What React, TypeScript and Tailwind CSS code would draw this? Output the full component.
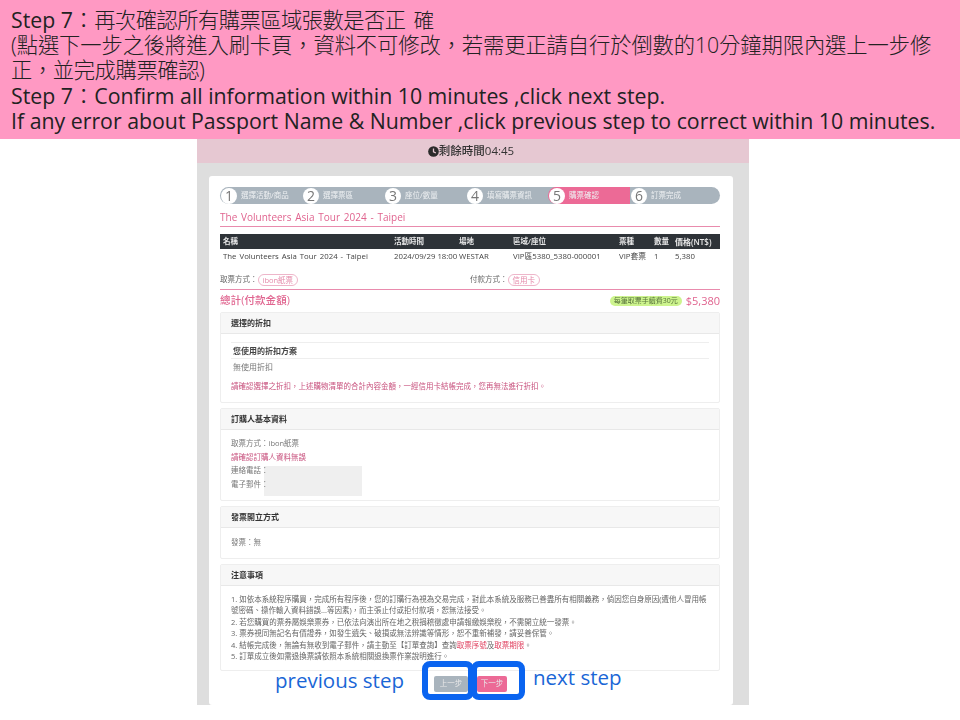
const font = { fontFamily: '"Open Sans","Noto Sans CJK TC",sans-serif' };

const steps = ['選擇活動/商品', '選擇票區', '座位/數量', '填寫購票資訊', '購票確認', '訂票完成'];
const cols = 'grid grid-cols-[171px_65px_54px_106px_35px_21px_1fr] px-[3px] items-center';

function Panel({ title, bodyClass, children }: { title: string; bodyClass: string; children: React.ReactNode }) {
  return (
    <section className="rounded-[2px] border border-[#eeeeee] bg-white">
      <div className="flex h-[21px] items-center border-b border-[#e8e8e8] bg-[#f7f7f7] px-[10px] text-[8px] font-semibold text-[#333]">{title}</div>
      <div className={bodyClass}>{children}</div>
    </section>
  );
}

export default function App() {
  return (
    <div lang="zh-TW" className="relative h-[720px] w-[960px] overflow-hidden bg-white" style={font}>
      <header className="h-[139px] bg-[#ff99c3] pl-[11px] pt-[7px] text-[21.3px] leading-[25px] text-[#222]">
        <div className="h-[25px] whitespace-nowrap">Step 7<span className="font-light">：</span><span className="font-light tracking-[-0.55px]">再次確認所有購票區域張數是否正</span><span className="ml-[8px] text-[20.7px] font-light">確</span></div>
        <div className="h-[25px] whitespace-nowrap font-light tracking-[-0.1px]">(點選下一步之後將進入刷卡頁，資料不可修改，若需更正請自行於倒數的10分鐘期限內選上一步修</div>
        <div className="h-[25px] font-light tracking-[-0.4px]">正，並完成購票確認)</div>
        <div className="mt-[1px] h-[25px] whitespace-nowrap">Step 7<span className="font-light">：</span>Confirm all information within 10 minutes ,click next step.</div>
        <div className="h-[25px] whitespace-nowrap">If any error about Passport Name &amp; Number ,click previous step to correct within 10 minutes.</div>
      </header>

      <main className="ml-[197px] h-[566px] w-[552px] bg-[#dedede] blur-[0.35px]">
        <div className="flex h-[24px] items-center justify-center bg-[#e6c8d2] pr-[4px] text-[11.5px] font-medium text-[#333]">
          <svg width="11" height="11" viewBox="0 0 12 12"><circle cx="6" cy="6" r="5.8" fill="#2b2b2b" /><path d="M6 2.8V6.3L8.6 7.6" stroke="#e6c8d2" strokeWidth="1.4" fill="none" /></svg>
          <span>剩餘時間04:45</span>
        </div>

        <div className="mx-[12px] mt-[13px] h-[529px] w-[524px] rounded-[3px] bg-white pl-[11px] pr-[13px] pt-[11px]">
          <div className="flex h-[17px] rounded-full bg-[#a9b4bd]">
            {steps.map((s, i) => (
              <div key={s} className={`flex w-[82px] shrink-0 items-center gap-[4px] pl-[1px] ${i === 4 ? 'rounded-l-full bg-[#ec6a96]' : ''}`}>
                <span className="flex size-[16px] shrink-0 items-center justify-center rounded-full bg-white text-[14px] leading-[16px] text-[#777]">{i + 1}</span>
                <span className="whitespace-nowrap text-[7.5px] text-[#eef0f2]">{s}</span>
              </div>
            ))}
          </div>

          <div className="mt-[7px] border-b border-[#e98bad] pb-[2px] text-[10px] leading-[13px] text-[#e0648f] [word-spacing:1.2px]">The Volunteers Asia Tour 2024 - Taipei</div>

          <div className={`${cols} mt-[7px] h-[15px] bg-[#2e3338] text-[7.5px] font-semibold text-[#e8e8e8]`}>
            <span>名稱</span><span>活動時間</span><span>場地</span><span>區域/座位</span><span>票種</span><span>數量</span><span className="text-[8px]">價格(NT$)</span>
          </div>
          <div className={`${cols} h-[16px] whitespace-nowrap text-[7.8px] text-[#444]`}>
            <span className="[word-spacing:1px]">The Volunteers Asia Tour 2024 - Taipei</span><span>2024/09/29 18:00</span><span>WESTAR</span><span>VIP區5380_5380-000001</span><span>VIP套票</span><span>1</span><span>5,380</span>
          </div>

          <div className="mt-[7px] flex h-[18px] items-center border-b border-[#e98bad] pb-[2px] text-[7.5px] text-[#666]">
            <div className="flex w-[250px] items-center">取票方式：<span className="rounded-full border border-[#eeb6ca] px-[4px] text-[7.5px] leading-[10px] text-[#e58aaa]">ibon紙票</span></div>
            <div className="flex items-center">付款方式：<span className="rounded-full border border-[#eeb6ca] px-[4px] text-[7.5px] leading-[10px] text-[#e58aaa]">信用卡</span></div>
          </div>

          <div className="flex h-[22px] items-center justify-between text-[#e0648f]">
            <span className="text-[10.5px] font-medium tracking-[0.1px]">總計(付款金額)</span>
            <div className="flex items-center gap-[4px]">
              <span className="rounded-full bg-[#cdf48e] px-[4px] text-[7px] leading-[10px] text-[#55703a]">每筆取票手續費30元</span>
              <span className="text-[11px]">$5,380</span>
            </div>
          </div>

          <div className="flex flex-col gap-[5px]">
            <Panel title="選擇的折扣" bodyClass="h-[68px] px-[10px] pt-[8px]">
              <div className="border-y border-[#eeeeee] px-[2px] text-[8px] font-semibold leading-[15px] text-[#444]">您使用的折扣方案</div>
              <div className="px-[2px] text-[8px] leading-[16px] text-[#777]">無使用折扣</div>
              <p className="mt-[5px] text-[7.5px] leading-[12px] text-[#c8527e]">請確認選擇之折扣，上述購物清單的合計內容金額，一經信用卡結帳完成，您再無法進行折扣。</p>
            </Panel>

            <Panel title="訂購人基本資料" bodyClass="relative h-[70px] px-[10px] pt-[7px] text-[7.5px] leading-[13.5px] text-[#777]">
              <div className="absolute left-[43px] top-[36px] h-[30px] w-[98px] bg-[#efefef]" />
              <div className="relative">取票方式：ibon紙票</div>
              <div className="relative text-[#c8527e]">請確認訂購人資料無誤</div>
              <div className="relative">連絡電話：</div>
              <div className="relative">電子郵件：</div>
            </Panel>

            <Panel title="發票開立方式" bodyClass="h-[30px] px-[10px] pt-[8px] text-[7.5px] leading-[13px] text-[#777]">
              發票：無
            </Panel>

            <Panel title="注意事項" bodyClass="h-[84px] px-[10px] pt-[8px] text-[7.5px] leading-[11.4px] text-[#666]">
              <div>1. 如依本系統程序購買，完成所有程序後，您的訂購行為視為交易完成，對此本系統及服務已善盡所有相關義務，倘因您自身原因(遭他人冒用帳號密碼、操作輸入資料錯誤...等因素)，而主張止付或拒付款項，恕無法接受。</div>
              <div>2. 若您購買的票券屬娛樂票券，已依法向演出所在地之稅捐稽徵處申請報繳娛樂稅，不需開立統一發票。</div>
              <div>3. 票券視同無記名有價證券，如發生遺失、破損或無法辨識等情形，恕不重新補發，請妥善保管。</div>
              <div>4. 結帳完成後，無論有無收到電子郵件，請主動至【訂單查詢】查詢<span className="text-[#e0405f]">取票序號</span>及<span className="text-[#e0405f]">取票期限</span>。</div>
              <div>5. 訂單成立後如需退換票請依照本系統相關退換票作業說明進行。</div>
            </Panel>
          </div>

          <div className="mt-[5px] ml-[214px] flex gap-[9px] text-[7.5px] text-[#e8e8e8]">
            <button className="flex h-[16px] w-[34px] items-center justify-center rounded-[2px] bg-[#a9b4bd]">上一步</button>
            <button className="flex h-[16px] w-[30px] items-center justify-center rounded-[2px] bg-[#ec6a96]">下一步</button>
          </div>
        </div>
      </main>

      <span className="absolute left-[275px] top-[666px] text-[20.5px] leading-[28px] text-[#1a66d6]">previous step</span>
      <span className="absolute left-[533px] top-[663px] text-[20.5px] leading-[28px] text-[#1a66d6]">next step</span>
      <div className="absolute left-[422px] top-[661px] h-[39px] w-[52px] rounded-[8px] border-[6px] border-[#0a64f0]" />
      <div className="absolute left-[471px] top-[661px] h-[39px] w-[54px] rounded-[8px] border-[6px] border-[#0a64f0]" />
    </div>
  );
}
